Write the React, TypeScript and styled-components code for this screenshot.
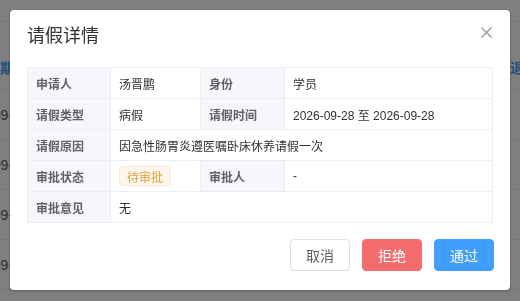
import React from "react";
import styled, { createGlobalStyle } from "styled-components";

const Global = createGlobalStyle`
  html, body { margin: 0; padding: 0; background: #fff; }
  body { font-family: "Liberation Sans", "Noto Sans CJK SC", sans-serif; width: 520px; height: 301px; overflow: hidden; }
`;

const Page = styled.div`
  width: 520px;
  height: 301px;
  overflow: hidden;
`;

const Toolbar = styled.div`
  height: 22px;
  border-bottom: 1px solid #ebeef5;
  box-sizing: border-box;
`;

const BgTable = styled.div`
  margin-left: -43px;
  width: 633px;
`;

const BgRow = styled.div<{ $head?: boolean }>`
  display: grid;
  grid-template-columns: 118px 1fr 90px;
  height: ${(p) => (p.$head ? "68px" : "50px")};
  border-bottom: 1px solid #ebeef5;
  box-sizing: border-box;
  align-items: center;
  padding-top: ${(p) => (p.$head ? "22px" : "0")};
  font-size: 14px;
  color: ${(p) => (p.$head ? "#409eff" : "#606266")};
  font-weight: ${(p) => (p.$head ? 700 : 400)};
`;

const BgCell = styled.div<{ $indent?: number }>`
  padding-left: ${(p) => p.$indent ?? 0}px;
  white-space: nowrap;
  overflow: hidden;
`;

const Overlay = styled.div`
  position: fixed;
  inset: 0;
  background: rgba(0, 0, 0, 0.5);
  display: flex;
  align-items: flex-start;
  justify-content: center;
  padding-top: 10px;
`;

const Dialog = styled.div`
  width: 500px;
  height: 280px;
  background: #fff;
  border-radius: 4px;
  box-shadow: 0 1px 3px rgba(0, 0, 0, 0.3);
  box-sizing: border-box;
  position: relative;
  display: flex;
  flex-direction: column;
`;

const Header = styled.div`
  padding: 14px 17px 0;
`;

const Title = styled.div`
  font-size: 18px;
  line-height: 24px;
  color: #303133;
`;

const CloseBtn = styled.button`
  position: absolute;
  top: 17px;
  right: 18px;
  width: 11px;
  height: 11px;
  padding: 0;
  border: none;
  background: transparent;
  display: flex;
  cursor: pointer;
`;

const Body = styled.div`
  padding: 19px 17px 0;
`;

const Table = styled.table`
  width: 466px;
  border-collapse: collapse;
  table-layout: fixed;
  font-size: 12px;
`;

const Label = styled.th`
  background: #f5f7fa;
  color: #606266;
  font-weight: 700;
  text-align: left;
  border: 1px solid #ebeef5;
  height: 31px;
  padding: 0 8px;
  box-sizing: border-box;
`;

const Value = styled.td`
  color: #303133;
  border: 1px solid #ebeef5;
  height: 31px;
  padding: 0 8px;
  box-sizing: border-box;
  white-space: nowrap;
`;

const Tag = styled.span`
  display: inline-flex;
  align-items: center;
  height: 20px;
  padding: 0 7px;
  background: #fdf6ec;
  border: 1px solid #faecd8;
  color: #e6a23c;
  border-radius: 4px;
  font-size: 12px;
  box-sizing: border-box;
`;

const Footer = styled.div`
  display: flex;
  justify-content: flex-end;
  gap: 12px;
  padding: 16px 16px 0;
`;

const Btn = styled.button<{ $kind: "default" | "danger" | "primary" }>`
  width: 60px;
  height: 32px;
  border-radius: 4px;
  font-size: 14px;
  font-family: inherit;
  padding: 0;
  cursor: pointer;
  border: 1px solid
    ${(p) => (p.$kind === "danger" ? "#f56c6c" : p.$kind === "primary" ? "#409eff" : "#dcdfe6")};
  background: ${(p) => (p.$kind === "danger" ? "#f56c6c" : p.$kind === "primary" ? "#409eff" : "#fff")};
  color: ${(p) => (p.$kind === "default" ? "#606266" : "#fff")};
`;

export default function App() {
  return (
    <>
      <Global />
      <Page>
        <Toolbar />
        <BgTable>
          <BgRow $head>
            <BgCell $indent={29}>日期</BgCell>
            <BgCell />
            <BgCell $indent={10}>退假</BgCell>
          </BgRow>
          {[0, 1, 2, 3].map((i) => (
            <BgRow key={i}>
              <BgCell $indent={0}>2026-09-28</BgCell>
              <BgCell />
              <BgCell />
            </BgRow>
          ))}
        </BgTable>
      </Page>
      <Overlay>
        <Dialog>
          <Header>
            <Title>请假详情</Title>
          </Header>
          <CloseBtn aria-label="close">
            <svg width="11" height="11" viewBox="0 0 11 11">
              <path d="M0.5 0.5 L10.5 10.5 M10.5 0.5 L0.5 10.5" stroke="#909399" strokeWidth="1.2" fill="none" />
            </svg>
          </CloseBtn>
          <Body>
            <Table>
              <colgroup>
                <col style={{ width: 83 }} />
                <col style={{ width: 90 }} />
                <col style={{ width: 84 }} />
                <col />
              </colgroup>
              <tbody>
                <tr>
                  <Label>申请人</Label>
                  <Value>汤晋鹏</Value>
                  <Label>身份</Label>
                  <Value>学员</Value>
                </tr>
                <tr>
                  <Label>请假类型</Label>
                  <Value>病假</Value>
                  <Label>请假时间</Label>
                  <Value>2026-09-28 至 2026-09-28</Value>
                </tr>
                <tr>
                  <Label>请假原因</Label>
                  <Value colSpan={3}>因急性肠胃炎遵医嘱卧床休养请假一次</Value>
                </tr>
                <tr>
                  <Label>审批状态</Label>
                  <Value>
                    <Tag>待审批</Tag>
                  </Value>
                  <Label>审批人</Label>
                  <Value>-</Value>
                </tr>
                <tr>
                  <Label>审批意见</Label>
                  <Value colSpan={3}>无</Value>
                </tr>
              </tbody>
            </Table>
          </Body>
          <Footer>
            <Btn $kind="default">取消</Btn>
            <Btn $kind="danger">拒绝</Btn>
            <Btn $kind="primary">通过</Btn>
          </Footer>
        </Dialog>
      </Overlay>
    </>
  );
}
